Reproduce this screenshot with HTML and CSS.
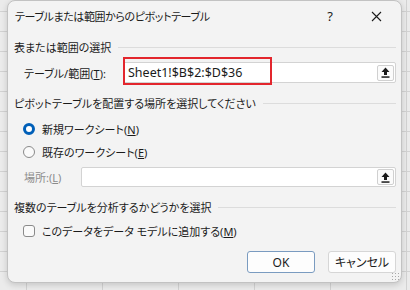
FILE: index.html
```html
<!DOCTYPE html>
<html lang="ja">
<head>
    <meta charset="UTF-8">
    <title>テーブルまたは範囲からのピボットテーブル</title>
    <link rel="stylesheet" href="styles.css">
</head>
<body>
    <div class="dialog">
        <!-- タイトルバー -->
        <div class="titlebar">
            <span class="title">テーブルまたは範囲からのピボットテーブル</span>
            <span class="help">?</span>
            <span class="close">
                <svg width="11" height="11" viewBox="0 0 11 11"><path d="M1 1L10 10M10 1L1 10" stroke="#1b1b1b" stroke-width="1.1"/></svg>
            </span>
        </div>

        <div class="content">
            <div class="group-head"><span>表または範囲の選択</span></div>
            <div class="field-row">
                <label class="field-label range-label">テーブル/範囲(<u>T</u>):</label>
                <div class="ref-input">
                    <span class="ref-text">Sheet1!$B$2:$D$36</span>
                    <span class="pick-btn">
                        <svg width="9" height="11" viewBox="0 0 9 11"><path d="M4.5 0.5L8.5 5H6V8H3V5H0.5Z" fill="#1b1b1b"/><rect x="0.5" y="9.3" width="8" height="1.5" fill="#1b1b1b"/></svg>
                    </span>
                    <div class="highlight"></div>
                </div>
            </div>

            <div class="group-head head-gap"><span>ピボットテーブルを配置する場所を選択してください</span></div>
            <div class="option-row first-option">
                <span class="radio checked"></span>
                <span>新規ワークシート(<u>N</u>)</span>
            </div>
            <div class="option-row">
                <span class="radio"></span>
                <span>既存のワークシート(<u>E</u>)</span>
            </div>
            <div class="field-row loc-row">
                <label class="field-label loc-label disabled">場所:(<u>L</u>)</label>
                <div class="ref-input">
                    <span class="ref-text"></span>
                    <span class="pick-btn">
                        <svg width="9" height="11" viewBox="0 0 9 11"><path d="M4.5 0.5L8.5 5H6V8H3V5H0.5Z" fill="#1b1b1b"/><rect x="0.5" y="9.3" width="8" height="1.5" fill="#1b1b1b"/></svg>
                    </span>
                </div>
            </div>

            <div class="group-head head-gap"><span>複数のテーブルを分析するかどうかを選択</span></div>
            <div class="option-row check-row">
                <span class="checkbox"></span>
                <span>このデータをデータ モデルに追加する(<u>M</u>)</span>
            </div>

            <div class="buttons">
                <button class="btn default">OK</button>
                <button class="btn">キャンセル</button>
            </div>
        </div>
        <div class="grip"></div>
    </div>
</body>
</html>
```

FILE: styles.css
```css
body {
    margin: 0;
    width: 410px;
    height: 290px;
    overflow: hidden;
    font-family: "Noto Sans", "Noto Sans CJK JP", sans-serif;
    font-size: 11px;
    color: #1b1b1b;
    background-color: #ebebeb;
    background-image:
        repeating-linear-gradient(to bottom, transparent 0 11px, #d2d2d2 11px 12px, transparent 12px 20px),
        repeating-linear-gradient(to right, transparent 0 26px, #d2d2d2 26px 27px, transparent 27px 76px);
    background-position: 0 0, 0 0;
    font-feature-settings: "palt";
}
.dialog {
    position: relative;
    margin-left: 7px;
    width: 395px;
    height: 283px;
    box-sizing: border-box;
    background: #f3f3f3;
    border: 1px solid #c2c2c2;
    border-radius: 8px;
    box-shadow: 0 2px 6px rgba(0, 0, 0, 0.16);
}
.titlebar {
    display: flex;
    align-items: center;
    height: 30px;
    padding-left: 7px;
}
.title { flex: 1; letter-spacing: -0.4px; }
.help { width: 20px; text-align: center; font-size: 13px; margin-right: 26px; }
.close { width: 20px; display: flex; justify-content: center; margin-right: 15px; }
.content { padding: 0 5px 0 6px; }
.group-head {
    display: flex;
    align-items: center;
    height: 16px;
    margin-top: 8px;
}
.group-head::after {
    content: "";
    flex: 1;
    height: 1px;
    background: #dcdcdc;
    margin-left: 7px;
}
.head-gap { margin-top: 12px; }
.field-row {
    display: flex;
    align-items: center;
    height: 21px;
    margin-top: 7px;
    padding-left: 10px;
}
.field-label { flex: none; }
.range-label { width: 99px; }
.loc-label { width: 57px; }
.disabled { color: #8b8b8b; }
.ref-input {
    position: relative;
    flex: 1;
    display: flex;
    align-items: center;
    height: 100%;
    box-sizing: border-box;
    background: #ffffff;
    border: 1px solid #d3d3d3;
    border-radius: 2px;
    padding: 0 1px 0 4px;
}
.ref-text { flex: 1; font-size: 12.5px; }
.pick-btn {
    display: flex;
    align-items: center;
    justify-content: center;
    width: 17px;
    height: 16px;
    box-sizing: border-box;
    border: 1px solid #d0d0d0;
    border-radius: 2px;
    background: #fbfbfb;
}
.highlight {
    position: absolute;
    left: -1px;
    top: -6px;
    width: 149px;
    height: 28px;
    box-sizing: border-box;
    border: 2px solid #e3262d;
}
.loc-row { height: 20px; margin-top: 7px; }
.option-row {
    display: flex;
    align-items: center;
    height: 16px;
    margin-top: 7px;
    padding-left: 9px;
    gap: 7px;
}
.first-option { margin-top: 10px; }
.check-row { margin-top: 8px; }
.radio {
    width: 12px;
    height: 12px;
    box-sizing: border-box;
    border: 1px solid #8a8a8a;
    border-radius: 50%;
    background: #fafafa;
}
.radio.checked {
    border: 3.5px solid #005fb8;
    background: #ffffff;
}
.checkbox {
    width: 12px;
    height: 12px;
    box-sizing: border-box;
    border: 1px solid #8a8a8a;
    border-radius: 3px;
    background: #fafafa;
}
.buttons {
    display: flex;
    justify-content: flex-end;
    gap: 13px;
    margin-top: 12px;
}
.btn {
    width: 68px;
    height: 22px;
    font-family: "Noto Sans", "Noto Sans CJK JP", sans-serif;
    font-size: 12px;
    color: #1b1b1b;
    background: #fdfdfd;
    border: 1px solid #d6d6d6;
    border-radius: 3px;
    padding: 0;
    font-feature-settings: "palt";
}
.btn.default { border-color: #7a9bc0; }
.grip {
    position: absolute;
    right: 2px;
    bottom: 2px;
    width: 8px;
    height: 8px;
    background-image: radial-gradient(circle, #a8a8a8 0.8px, transparent 1px);
    background-size: 3px 3px;
}
```
